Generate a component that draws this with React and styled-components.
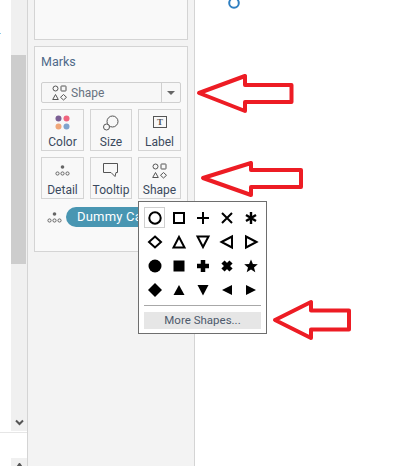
import React from "react";
import styled, { createGlobalStyle } from "styled-components";

const Global = createGlobalStyle`
  html, body { margin: 0; padding: 0; background: #fff; }
  body { width: 406px; height: 466px; overflow: hidden; font-family: Roboto, "Liberation Sans", sans-serif; }
`;

const Page = styled.div`
  position: relative;
  display: flex;
  width: 406px;
  height: 466px;
  overflow: hidden;
  background: #fff;
`;

const LeftGutter = styled.div`
  width: 27px;
  display: flex;
  flex-direction: column;
  flex: none;
`;

const ScrollArea = styled.div`
  height: 432px;
  padding-left: 11px;
  display: flex;
  border-bottom: 1px solid #e6e6e6;
`;

const ScrollTrack = styled.div`
  width: 16px;
  height: 431px;
  background: #f0f0f0;
  display: flex;
  flex-direction: column;
  align-items: center;
  padding-top: 55px;
  box-sizing: border-box;
`;

const ScrollThumb = styled.div`
  width: 15px;
  height: 209px;
  margin-right: 1px;
  background: #cdcdcd;
`;

const Chevron = styled.svg`
  margin-top: auto;
  margin-bottom: 5px;
  display: block;
`;

const LowerGutter = styled.div`
  flex: 1;
  padding-left: 11px;
  display: flex;
  align-items: flex-end;
`;

const LowerTrack = styled.div`
  width: 16px;
  height: 8px;
  background: #f0f0f0;
  display: flex;
  justify-content: center;
  align-items: flex-end;
  overflow: hidden;
`;

const StrayDot = styled.div`
  position: absolute;
  left: 0;
  top: 33px;
  width: 1px;
  height: 1px;
  background: #8ccbe8;
`;

const SidePanel = styled.div`
  flex: none;
  width: 168px;
  height: 466px;
  box-sizing: border-box;
  background: #f3f3f3;
  border-left: 1px solid #d4d4d4;
  border-right: 1px solid #d4d4d4;
  padding: 0 6px;
  display: flex;
  flex-direction: column;
  gap: 6px;
`;

const Card = styled.section`
  box-sizing: border-box;
  width: 154px;
  background: #f9f9f9;
  border: 1px solid #d4d4d4;
`;

const TopCard = styled(Card)`
  height: 41px;
  margin-top: -1px;
  border-top: 0;
`;

const MarksCard = styled(Card)`
  height: 206px;
  padding: 0 6px;
`;

const Heading = styled.div`
  height: 35px;
  line-height: 29px;
  font-size: 12.5px;
  color: #4f6a8a;
`;

const MarkSelect = styled.div`
  box-sizing: border-box;
  height: 21px;
  width: 140px;
  display: flex;
  align-items: center;
  border: 1px solid #cfcfcf;
  border-radius: 2px;
  background: #f7f7f7;
  font-size: 12px;
  color: #68727f;
`;

const SelectBody = styled.div`
  flex: 1;
  display: flex;
  align-items: center;
  gap: 4px;
  padding-left: 10px;
`;

const Caret = styled.div`
  width: 18px;
  height: 19px;
  border-left: 1px solid #cfcfcf;
  display: flex;
  align-items: center;
  justify-content: center;
  &::after {
    content: "";
    border-left: 4px solid transparent;
    border-right: 4px solid transparent;
    border-top: 4px solid #666;
  }
`;

const TileGrid = styled.div`
  display: grid;
  grid-template-columns: 43px 42px 43px;
  grid-auto-rows: 42px;
  column-gap: 6px;
  row-gap: 6px;
  margin-top: 6px;
`;

const Tile = styled.div`
  box-sizing: border-box;
  border: 1px solid #d4d4d4;
  background: #f8f8f8;
  display: flex;
  flex-direction: column;
  align-items: center;
  font-size: 12px;
  line-height: 14px;
  color: #3b4a5e;
  white-space: nowrap;
`;

const TileIcon = styled.div`
  height: 25px;
  display: flex;
  align-items: center;
  justify-content: center;
`;

const PillRow = styled.div`
  display: flex;
  align-items: center;
  margin-top: 8px;
  padding-left: 6px;
  gap: 4px;
`;

const Pill = styled.div`
  height: 20px;
  width: 92px;
  border-radius: 10px;
  background: #4996b2;
  color: #fff;
  font-size: 13px;
  letter-spacing: 0.2px;
  line-height: 20px;
  padding-left: 11px;
  box-sizing: border-box;
  white-space: nowrap;
  overflow: hidden;
`;

const Canvas = styled.div`
  flex: 1;
  background: #fff;
`;

const Popup = styled.div`
  position: absolute;
  left: 138px;
  top: 201px;
  width: 129px;
  height: 133px;
  box-sizing: border-box;
  background: #fff;
  border: 1px solid #6e6e6e;
  padding: 5px 5px 0;
`;

const ShapeGrid = styled.div`
  display: grid;
  grid-template-columns: repeat(5, 21px);
  grid-auto-rows: 21px;
  gap: 3px;
`;

const ShapeCell = styled.div`
  box-sizing: border-box;
  display: flex;
  align-items: center;
  justify-content: center;
  border: 1px solid ${(p) => (p.$selected ? "#cfcfcf" : "transparent")};
`;

const Divider = styled.div`
  height: 1px;
  margin: 5px 0 6px;
  background: #a8a8a8;
`;

const MoreButton = styled.div`
  height: 17px;
  background: #e6e6e6;
  text-align: center;
  font-size: 11.5px;
  line-height: 17px;
  color: #4d5a6c;
`;

const Overlay = styled.svg`
  position: absolute;
  left: 0;
  top: 0;
`;

// 4 small shapes used by the Shape mark type
const ShapesIcon = () => (
  <svg width="15" height="16" viewBox="0 0 15 16" fill="none" stroke="#555" strokeWidth="1">
    <circle cx="3.5" cy="3.5" r="2.5" />
    <rect x="9" y="1" width="5" height="5" rx="0.5" />
    <path d="M3.5 9.5 L6.3 14.5 H0.7 Z" />
    <path d="M11.5 9.5 L14.5 12.3 L11.5 15 L8.5 12.3 Z" />
  </svg>
);

const DotsIcon = () => (
  <svg width="15" height="11" viewBox="0 0 15 11" fill="none" stroke="#666">
    <circle cx="7.5" cy="2" r="1.8" fill="#666" stroke="none" />
    <circle cx="2.5" cy="8.5" r="1.6" />
    <circle cx="7.5" cy="8.5" r="1.6" />
    <circle cx="12.5" cy="8.5" r="1.6" />
  </svg>
);

const ColorIcon = () => (
  <svg width="16" height="16" viewBox="0 0 16 16">
    <circle cx="3.5" cy="3.5" r="3" fill="#7b5f94" />
    <circle cx="11.5" cy="3.5" r="3" fill="#f0657f" />
    <circle cx="3.5" cy="11.5" r="3" fill="#f0a77a" />
    <circle cx="11.5" cy="11.5" r="3" fill="#7fa4cd" />
  </svg>
);

const SizeIcon = () => (
  <svg width="16" height="16" viewBox="0 0 16 16" fill="none" stroke="#555">
    <circle cx="9.5" cy="6.5" r="5.5" />
    <circle cx="3.5" cy="12" r="3" fill="#f8f8f8" />
  </svg>
);

const LabelIcon = () => (
  <svg width="14" height="13" viewBox="0 0 14 13" fill="none">
    <rect x="0.5" y="0.5" width="13" height="11" stroke="#555" />
    <text x="7" y="9" textAnchor="middle" fontFamily="Liberation Serif, serif" fontSize="9" fontWeight="700" fill="#555">T</text>
  </svg>
);

const TooltipIcon = () => (
  <svg width="16" height="15" viewBox="0 0 16 15" fill="none" stroke="#555">
    <path d="M0.5 0.5 H14.5 V9.5 H13 L12 13.5 L8 9.5 H0.5 Z" />
  </svg>
);

const SHAPES = [
  { id: "circle", el: <circle cx="8" cy="8" r="5.7" fill="none" stroke="#000" strokeWidth="2" /> },
  { id: "square", el: <rect x="3" y="3" width="10" height="10" fill="none" stroke="#000" strokeWidth="2" /> },
  { id: "plus", el: <path d="M8 2 V14 M2 8 H14" stroke="#000" strokeWidth="2" /> },
  { id: "cross", el: <path d="M3 3 L13 13 M13 3 L3 13" stroke="#000" strokeWidth="2" /> },
  { id: "asterisk", el: <path d="M8 2 V14 M3 5 L13 11 M13 5 L3 11" stroke="#000" strokeWidth="2.4" /> },
  { id: "diamond", el: <path d="M8 2.5 L14 8 L8 13.5 L2 8 Z" fill="none" stroke="#000" strokeWidth="2" /> },
  { id: "tri", el: <path d="M8 3 L13.5 13.5 H2.5 Z" fill="none" stroke="#000" strokeWidth="2" /> },
  { id: "triDown", el: <path d="M2.5 2.5 H13.5 L8 13 Z" fill="none" stroke="#000" strokeWidth="2" /> },
  { id: "triLeft", el: <path d="M2.5 8 L13 2.5 V13.5 Z" fill="none" stroke="#000" strokeWidth="2" /> },
  { id: "triRight", el: <path d="M13.5 8 L3 2.5 V13.5 Z" fill="none" stroke="#000" strokeWidth="2" /> },
  { id: "disc", el: <circle cx="8" cy="8" r="6.5" fill="#000" /> },
  { id: "box", el: <rect x="2.5" y="2.5" width="11" height="11" fill="#000" /> },
  { id: "fatPlus", el: <path d="M8 2 V14 M2 8 H14" stroke="#000" strokeWidth="4.5" strokeLinejoin="round" /> },
  { id: "fatCross", el: <path d="M4 4 L12 12 M12 4 L4 12" stroke="#000" strokeWidth="4.5" /> },
  { id: "star", el: <path d="M8 1.5 L9.9 6 L14.8 6.3 L11 9.4 L12.3 14.2 L8 11.5 L3.7 14.2 L5 9.4 L1.2 6.3 L6.1 6 Z" fill="#000" /> },
  { id: "diamondFill", el: <path d="M8 1 L15 8 L8 15 L1 8 Z" fill="#000" /> },
  { id: "triFill", el: <path d="M8 3 L13.5 13 H2.5 Z" fill="#000" /> },
  { id: "triDownFill", el: <path d="M2.5 3 H13.5 L8 13.5 Z" fill="#000" /> },
  { id: "triLeftFill", el: <path d="M3 8 L13 3 V13 Z" fill="#000" /> },
  { id: "triRightFill", el: <path d="M13 8 L3 3 V13 Z" fill="#000" /> },
];

// red call-out arrows, drawn in page coordinates
const ARROWS = [
  "M199 93 L245 76 V85 H291.5 V102 H245 V111 Z",
  "M203 178 L251 163 V170 H301 V187 H251 V195 Z",
  "M275 320 L311 302 V310.5 H349 V329.5 H311 V338 Z",
];

export default function App() {
  return (
    <Page>
      <Global />
      <StrayDot />
      <LeftGutter>
        <ScrollArea>
          <ScrollTrack>
            <ScrollThumb />
            <Chevron width="9" height="7" viewBox="0 0 9 7" fill="none">
              <path d="M1 1.5 L4.5 5 L8 1.5" stroke="#555" strokeWidth="2" />
            </Chevron>
          </ScrollTrack>
        </ScrollArea>
        <LowerGutter>
          <LowerTrack>
            <svg width="9" height="3" viewBox="0 0 9 3" fill="none">
              <path d="M1 6 L4.5 1 L8 6" stroke="#555" strokeWidth="2" />
            </svg>
          </LowerTrack>
        </LowerGutter>
      </LeftGutter>
      <SidePanel>
        <TopCard />
        <MarksCard>
          <Heading>Marks</Heading>
          <MarkSelect>
            <SelectBody>
              <ShapesIcon />
              <span>Shape</span>
            </SelectBody>
            <Caret />
          </MarkSelect>
          <TileGrid>
            <Tile><TileIcon><ColorIcon /></TileIcon>Color</Tile>
            <Tile><TileIcon><SizeIcon /></TileIcon>Size</Tile>
            <Tile><TileIcon><LabelIcon /></TileIcon>Label</Tile>
            <Tile><TileIcon><DotsIcon /></TileIcon>Detail</Tile>
            <Tile><TileIcon><TooltipIcon /></TileIcon>Tooltip</Tile>
            <Tile><TileIcon><ShapesIcon /></TileIcon>Shape</Tile>
          </TileGrid>
          <PillRow>
            <DotsIcon />
            <Pill>Dummy Calc</Pill>
          </PillRow>
        </MarksCard>
      </SidePanel>
      <Canvas />

      <Popup>
        <ShapeGrid>
          {SHAPES.map((s, i) => (
            <ShapeCell key={s.id} $selected={i === 0}>
              <svg width="16" height="16" viewBox="0 0 16 16">{s.el}</svg>
            </ShapeCell>
          ))}
        </ShapeGrid>
        <Divider />
        <MoreButton>More Shapes...</MoreButton>
      </Popup>

      <Overlay width="406" height="466" viewBox="0 0 406 466" fill="none">
        <circle cx="234" cy="3" r="4.8" stroke="#2f7fc1" strokeWidth="2" />
        {ARROWS.map((d) => (
          <path key={d} d={d} stroke="#ed1c24" strokeWidth="4" strokeLinejoin="round" />
        ))}
      </Overlay>
    </Page>
  );
}
